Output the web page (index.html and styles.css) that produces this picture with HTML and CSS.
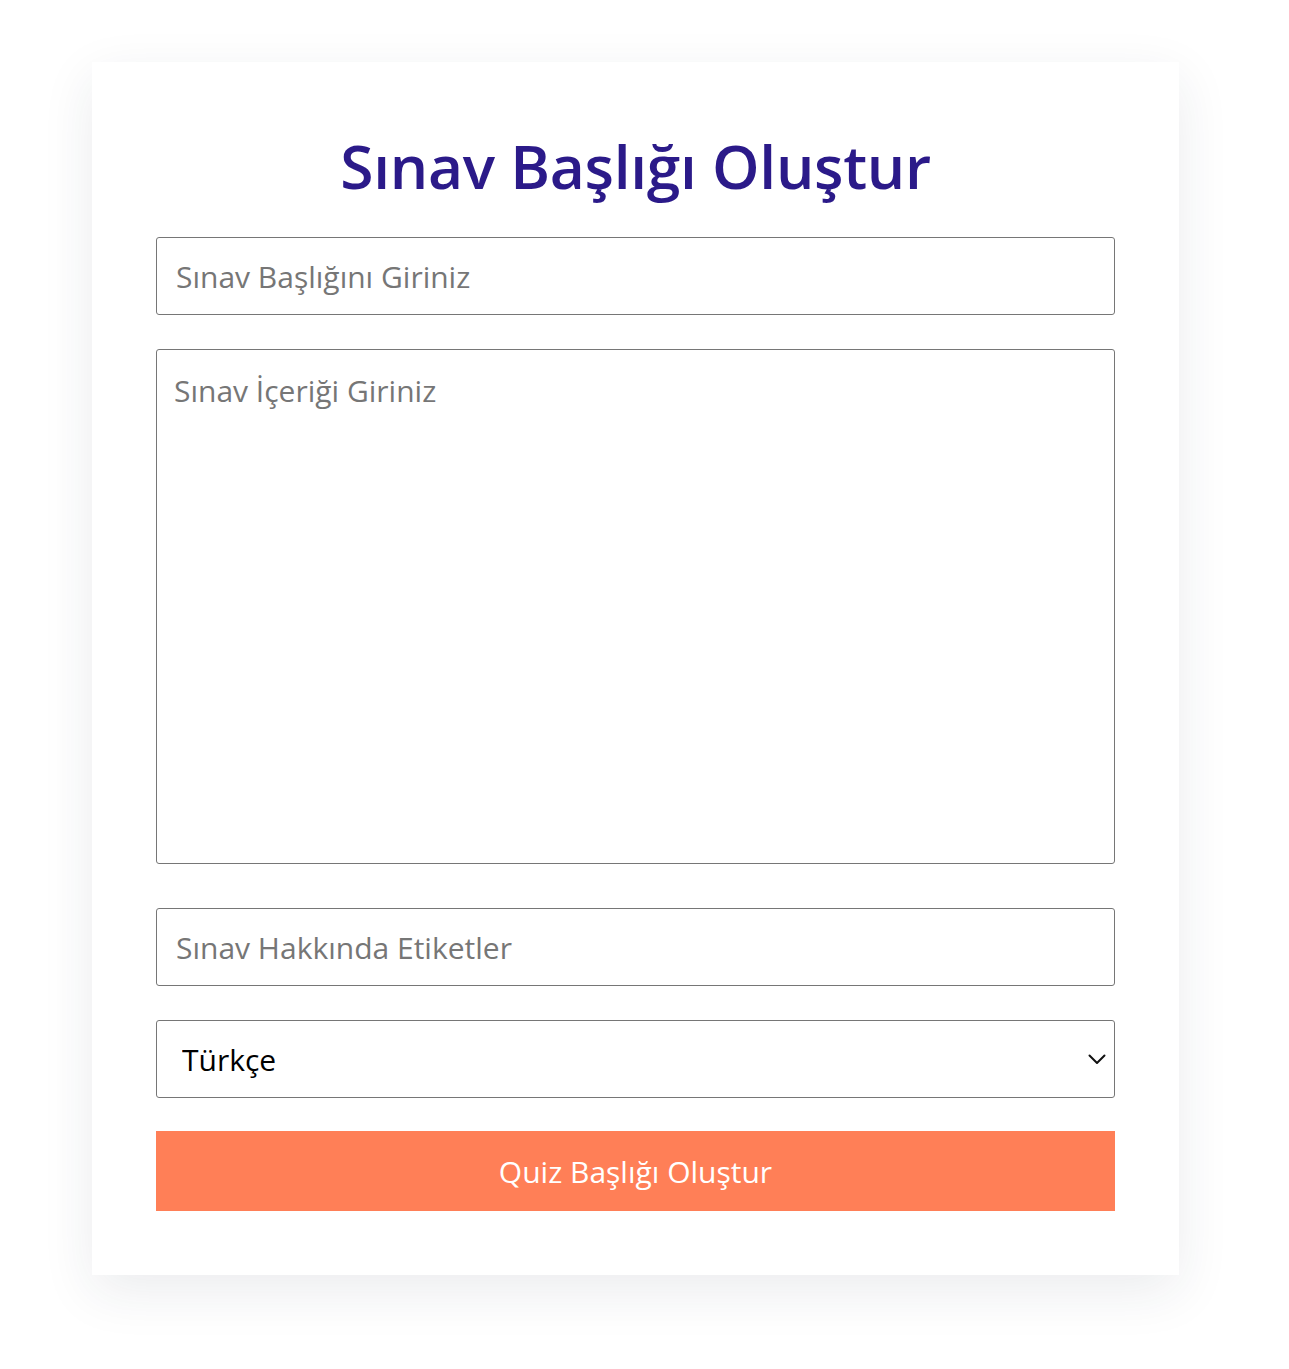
FILE: index.html
```html
<!DOCTYPE html>
<html lang="tr">
<head>
<meta charset="utf-8">
<title>Sınav Başlığı Oluştur</title>
<link rel="stylesheet" href="styles.css">
</head>
<body>
<main class="card">
  <h1 class="title">Sınav Başlığı Oluştur</h1>
  <form class="form">
    <input class="field" type="text" placeholder="Sınav Başlığını Giriniz">
    <textarea class="field area" placeholder="Sınav İçeriği Giriniz"></textarea>
    <input class="field tags" type="text" placeholder="Sınav Hakkında Etiketler">
    <div class="select-wrap">
      <select class="field select">
        <option>Türkçe</option>
        <option>English</option>
      </select>
      <svg class="chevron" width="18" height="11" viewBox="0 0 18 11" aria-hidden="true">
        <path d="M1.5 1.5 L9 9 L16.5 1.5" fill="none" stroke="#111" stroke-width="2" stroke-linecap="round" stroke-linejoin="round"/>
      </svg>
    </div>
    <button class="submit" type="button">Quiz Başlığı Oluştur</button>
  </form>
</main>
</body>
</html>
```

FILE: styles.css
```css
* { box-sizing: border-box; }

html, body {
  margin: 0;
  padding: 0;
  background: #ffffff;
}

body {
  font-family: "Open Sans", "Noto Sans", sans-serif;
  padding: 62px 0 94px 92px;
}

.card {
  width: 1087px;
  background: #ffffff;
  padding: 64px 64px 64px 64px;
  box-shadow: 0 16px 50px rgba(30, 40, 70, 0.09);
}

.title {
  margin: 0 0 31px 0;
  text-align: center;
  color: #2b1a89;
  font-size: 60.5px;
  font-weight: 600;
  line-height: 80px;
  letter-spacing: -0.3px;
}

.form {
  display: flex;
  flex-direction: column;
}

.field {
  display: block;
  width: 100%;
  height: 78px;
  border: 1px solid #767676;
  border-radius: 3px;
  background: #fff;
  font-family: "Open Sans", "Noto Sans", sans-serif;
  font-size: 30px;
  color: #000;
  padding: 0 19px;
  margin: 0 0 34px 0;
  outline: none;
}

.field::placeholder {
  color: #767676;
  opacity: 1;
}

.area {
  height: 515px;
  padding: 20px 17px;
  resize: none;
  margin-bottom: 44px;
}

.select-wrap {
  position: relative;
  margin: 0 0 33px 0;
}

.select {
  appearance: none;
  -webkit-appearance: none;
  margin: 0;
  padding-left: 25px;
  color: #000;
}

.chevron {
  position: absolute;
  right: 9px;
  top: 34px;
  pointer-events: none;
}

.submit {
  display: block;
  width: 100%;
  height: 80px;
  border: none;
  background: #ff7f57;
  color: #ffffff;
  font-family: "Open Sans", "Noto Sans", sans-serif;
  font-size: 30px;
  cursor: pointer;
}
```
